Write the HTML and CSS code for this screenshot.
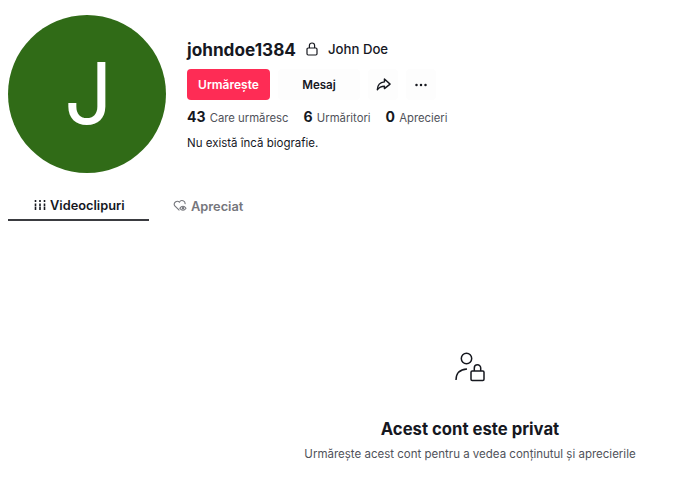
FILE: index.html
```html
<!DOCTYPE html>
<html lang="ro">
<head>
  <meta charset="UTF-8">
  <meta name="viewport" content="width=device-width, initial-scale=1.0">
  <title>johndoe1384</title>
  <link rel="stylesheet" href="styles.css">
</head>
<body>

  <!-- Antet profil -->
  <header class="profile">
    <div class="avatar">J</div>
    <div class="info">
      <div class="names">
        <h1 class="username">johndoe1384</h1>
        <svg class="lock-icon" width="14" height="14" viewBox="0 0 14 14" fill="none" stroke="#16181f" stroke-width="1.2">
          <rect x="2" y="6" width="10" height="7" rx="1.2"/>
          <path d="M4.4 6V3.6a2.6 2.6 0 0 1 5.2 0V6"/>
        </svg>
        <span class="nickname">John Doe</span>
      </div>
      <div class="actions">
        <button class="btn btn-follow">Urmărește</button>
        <button class="btn btn-message">Mesaj</button>
        <button class="btn btn-icon">
          <svg width="15" height="15" viewBox="0 0 16 16" fill="none" stroke="#16181f" stroke-width="1.5" stroke-linejoin="round">
            <path d="M9 2.2 15 7.6 9 12.4V9.800C6 9.800 3.400 10.800 1.400 13.600 1.600 9 4.400 5.600 9 5.200Z"/>
          </svg>
        </button>
        <button class="btn btn-icon">
          <svg width="16" height="16" viewBox="0 0 16 16" fill="#16181f">
            <circle cx="3.500" cy="8" r="1.250"/><circle cx="8" cy="8" r="1.250"/><circle cx="12.500" cy="8" r="1.250"/>
          </svg>
        </button>
      </div>
      <div class="stats">
        <span class="stat"><strong>43</strong> Care urmăresc</span>
        <span class="stat"><strong>6</strong> Urmăritori</span>
        <span class="stat"><strong>0</strong> Aprecieri</span>
      </div>
      <p class="bio">Nu există încă biografie.</p>
    </div>
  </header>

  <!-- Tab-uri -->
  <nav class="tabs">
    <div class="tab tab-active">
      <svg width="12" height="12" viewBox="0 0 12 12" fill="none" stroke="#16181f" stroke-width="1.6">
        <path d="M1.500 1v2M1.500 4.500v3M1.500 8v3M6 1v2M6 4.500v3M6 8v3M10.500 1v2M10.500 4.500v3M10.500 8v3"/>
      </svg>
      Videoclipuri
    </div>
    <div class="tab">
      <svg width="14" height="14" viewBox="0 0 14 14" fill="none" stroke="#75767c" stroke-width="1.1">
        <path d="M6.400 11.400 1.800 7A3 3 0 0 1 6.400 3.200 3 3 0 0 1 12 5.200"/>
        <path d="M6.800 9.200C7.600 8 8.800 7.200 10 7.200S12.200 8 13 9.200C12.200 10.400 11.200 11.200 10 11.200S7.600 10.400 6.800 9.200Z"/>
        <circle cx="10" cy="9.200" r=".7" fill="#75767c"/>
      </svg>
      Apreciat
    </div>
  </nav>

  <!-- Cont privat -->
  <section class="private">
    <svg class="private-icon" width="30" height="30" viewBox="0 0 30 30" fill="none" stroke="#16181f" stroke-width="1.5">
      <circle cx="11.500" cy="6.500" r="5.200"/>
      <path d="M1 28C1 22 4.500 17.500 12 17"/>
      <rect x="16" y="19" width="13" height="9.500" rx="1.200"/>
      <path d="M19.300 19v-3a3.200 3.200 0 0 1 6.400 0v3"/>
    </svg>
    <h2 class="private-title">Acest cont este privat</h2>
    <p class="private-text">Urmărește acest cont pentru a vedea conținutul și aprecierile</p>
  </section>

</body>
</html>
```

FILE: styles.css
```css
* {
  box-sizing: border-box;
}
body {
  margin: 0;
  padding: 15px 8px 0;
  font-family: Inter, "Liberation Sans", sans-serif;
  color: #16181f;
  background-color: #fff;
}
.profile {
  display: flex;
  gap: 21px;
}
.avatar {
  width: 158px;
  height: 158px;
  flex-shrink: 0;
  padding-left: 3px;
  border-radius: 50%;
  background-color: #306b17;
  color: #fff;
  font-size: 85px;
  font-weight: 400;
  line-height: 158px;
  text-align: center;
}
.info {
  padding-top: 21px;
}
.names {
  display: flex;
  align-items: center;
  height: 26px;
}
.username {
  margin: 0;
  font-size: 17.2px;
  font-weight: 700;
}
.lock-icon {
  margin-left: 9px;
}
.nickname {
  margin-left: 9px;
  font-size: 13.2px;
  font-weight: 500;
}
.actions {
  display: flex;
  gap: 8px;
  margin-top: 7px;
}
.btn {
  height: 31px;
  padding: 0;
  border: none;
  border-radius: 4px;
  font-family: inherit;
  font-size: 12px;
  font-weight: 600;
  cursor: pointer;
}
.btn-follow {
  width: 83px;
  background-color: #fe2c55;
  color: #fff;
}
.btn-message {
  width: 82px;
  font-size: 11.6px;
  background-color: #fdfdfd;
  color: #16181f;
}
.btn-icon {
  display: flex;
  align-items: center;
  justify-content: center;
  width: 30px;
  background-color: #fdfdfd;
}
.stats {
  display: flex;
  gap: 15px;
  margin-top: 9px;
  font-size: 11.3px;
  line-height: 16px;
  color: #50525a;
}
.stat strong {
  margin-right: 1px;
  font-size: 14px;
  font-weight: 700;
  color: #16181f;
}
.bio {
  margin: 9px 0 0;
  font-size: 11.5px;
  line-height: 16px;
  color: #16181f;
}
.tabs {
  display: flex;
  margin-top: 15px;
}
.tab {
  display: flex;
  align-items: center;
  gap: 4px;
  height: 33px;
  padding: 3px 24px 0 26px;
  font-size: 12.8px;
  font-weight: 600;
  color: #75767c;
}
.tab + .tab {
  padding-left: 24px;
}
.tab-active {
  width: 141px;
  border-bottom: 2px solid #3a3b40;
  color: #16181f;
}
.private {
  display: flex;
  flex-direction: column;
  align-items: center;
  margin: 131px -8px 0 232px;
  text-align: center;
}
.private-title {
  margin: 35px 0 0;
  font-size: 16.7px;
  line-height: 24px;
  font-weight: 700;
  color: #16181f;
}
.private-text {
  margin: 5px 0 0;
  font-size: 11.5px;
  line-height: 16px;
  color: #50525a;
}
```
